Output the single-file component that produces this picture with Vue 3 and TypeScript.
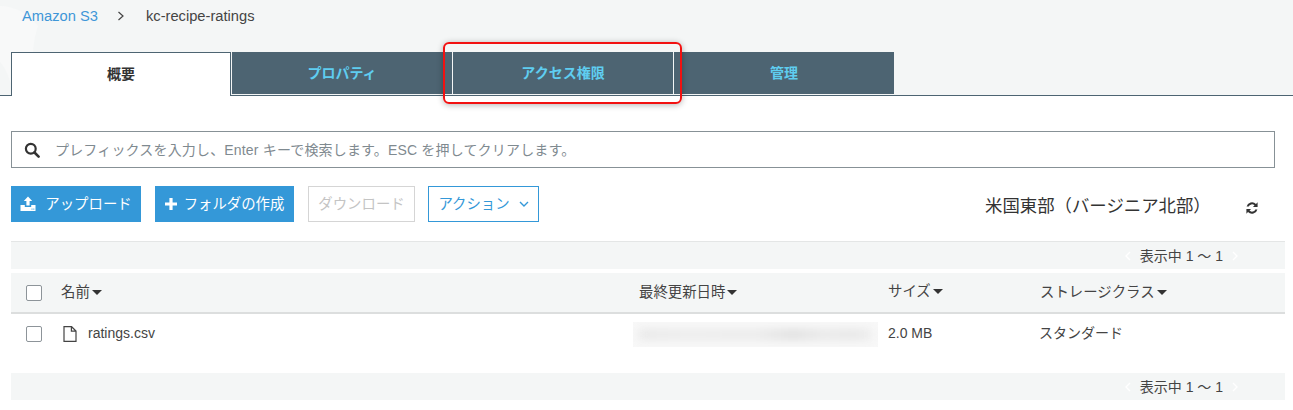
<script setup lang="ts">
const tabs = ['概要', 'プロパティ', 'アクセス権限', '管理']

const columns = [
  { label: '名前', cls: 'col-name' },
  { label: '最終更新日時', cls: 'col-date' },
  { label: 'サイズ', cls: 'col-size' },
  { label: 'ストレージクラス', cls: 'col-class' },
]
</script>

<template>
  <div class="page">
    <header class="top">
      <svg class="swoosh" width="45" height="95" viewBox="0 0 45 95">
        <path d="M0 6 C14 6 30 14 38 26 C36 32 34 40 33 52 H11 V84 C8 74 4 66 0 62 Z" fill="#f8f9f9" />
      </svg>
      <nav class="crumbs">
        <a class="crumb-link">Amazon S3</a>
        <svg class="crumb-sep" width="8" height="10" viewBox="0 0 8 10">
          <path d="M1.5 1 L6 5 L1.5 9" fill="none" stroke="#444" stroke-width="1.2" />
        </svg>
        <span>kc-recipe-ratings</span>
      </nav>
      <div class="tabs">
        <div v-for="(tab, i) in tabs" :key="tab" class="tab" :class="{ active: i === 0 }">{{ tab }}</div>
      </div>
    </header>

    <main class="content">
      <div class="search">
        <svg width="16" height="16" viewBox="0 0 16 16">
          <circle cx="6.8" cy="6.8" r="4.9" fill="none" stroke="#333" stroke-width="2.2" />
          <path d="M10.5 10.5 L14.6 14.6" stroke="#333" stroke-width="2.6" stroke-linecap="round" />
        </svg>
        <span class="search-text">プレフィックスを入力し、Enter キーで検索します。ESC を押してクリアします。</span>
      </div>

      <div class="toolbar">
        <button class="btn primary upload">
          <svg width="16" height="16" viewBox="0 0 16 16">
            <path d="M8 0.5 L12.2 5 H9.6 V9.5 H6.4 V5 H3.8 Z" fill="#fff" />
            <path d="M0.5 9 H4.8 V11 H11.2 V9 H15.5 V15 H0.5 Z" fill="#fff" />
            <rect x="11.5" y="12.6" width="1" height="1" fill="#3498d8" />
            <rect x="13.3" y="12.6" width="1" height="1" fill="#3498d8" />
          </svg>
          <span class="btn-text">アップロード</span>
        </button>
        <button class="btn primary folder">
          <svg width="12" height="12" viewBox="0 0 12 12">
            <path d="M4.4 0 H7.6 V4.4 H12 V7.6 H7.6 V12 H4.4 V7.6 H0 V4.4 H4.4 Z" fill="#fff" />
          </svg>
          <span class="btn-text">フォルダの作成</span>
        </button>
        <button class="btn disabled"><span class="btn-text">ダウンロード</span></button>
        <button class="btn outline">
          <span class="btn-text">アクション</span>
          <svg width="10" height="6" viewBox="0 0 10 6">
            <path d="M1 1 L5 5 L9 1" fill="none" stroke="#3498d8" stroke-width="1.4" />
          </svg>
        </button>
        <span class="region">米国東部（バージニア北部）</span>
        <svg class="refresh" width="14" height="14" viewBox="0 0 14 14">
          <path d="M1.6 5.6 A5.6 5.6 0 0 1 11 2.9 L12.6 1.3 V6 H7.9 L9.5 4.4 A3.5 3.5 0 0 0 3.7 5.6 Z" fill="#333" />
          <path d="M12.4 8.4 A5.6 5.6 0 0 1 3 11.1 L1.4 12.7 V8 H6.1 L4.5 9.6 A3.5 3.5 0 0 0 10.3 8.4 Z" fill="#333" />
        </svg>
      </div>

      <div class="pager">
        <svg width="6" height="10" viewBox="0 0 6 10"><path d="M5 1 L1 5 L5 9" fill="none" stroke="#fff" stroke-width="1.4" /></svg>
        <span class="pager-text">表示中 1 ～ 1</span>
        <svg width="6" height="10" viewBox="0 0 6 10"><path d="M1 1 L5 5 L1 9" fill="none" stroke="#fff" stroke-width="1.4" /></svg>
      </div>

      <div class="table-head">
        <span class="check"></span>
        <div v-for="col in columns" :key="col.label" class="th" :class="col.cls">
          <span class="th-text">{{ col.label }}</span><i class="caret"></i>
        </div>
      </div>

      <div class="table-row">
        <span class="check"></span>
        <div class="col-name file">
          <svg width="14" height="16" viewBox="0 0 14 16">
            <path d="M1 0.7 H8.6 L13 5 V15.3 H1 Z M8.4 0.7 V5.2 H13" fill="none" stroke="#444" stroke-width="1.2" />
          </svg>
          <span>ratings.csv</span>
        </div>
        <div class="col-date">
          <div class="blurred"><div class="blur-ink"></div></div>
        </div>
        <div class="col-size">2.0 MB</div>
        <div class="col-class storage">スタンダード</div>
      </div>

      <div class="pager footer-pager">
        <svg width="6" height="10" viewBox="0 0 6 10"><path d="M5 1 L1 5 L5 9" fill="none" stroke="#fff" stroke-width="1.4" /></svg>
        <span class="pager-text">表示中 1 ～ 1</span>
        <svg width="6" height="10" viewBox="0 0 6 10"><path d="M1 1 L5 5 L1 9" fill="none" stroke="#fff" stroke-width="1.4" /></svg>
      </div>
    </main>

    <div class="highlight"></div>
  </div>
</template>

<style scoped>
.page {
  position: relative;
  width: 1293px;
  height: 410px;
  overflow: hidden;
  background: #fff;
  color: #444;
  font-family: "Liberation Sans", "Noto Sans CJK JP", sans-serif;
  font-size: 14px;
}

.top {
  position: relative;
  height: 96px;
  box-sizing: border-box;
  background: #f4f6f6;
  border-bottom: 1px solid #4d6472;
  padding-left: 11px;
}
.swoosh {
  position: absolute;
  left: 0;
  top: 0;
}
.crumbs {
  position: relative;
  height: 52px;
  box-sizing: border-box;
  padding: 8px 0 0 11px;
  display: flex;
  align-items: flex-start;
  line-height: 16px;
  font-size: 14.7px;
  color: #444;
}
.crumb-link {
  color: #3f97d8;
}
.crumb-sep {
  margin: 3px 21px 0 19px;
}

.tabs {
  position: relative;
  display: flex;
  gap: 1px;
}
.tab {
  width: 220px;
  height: 42px;
  box-sizing: border-box;
  padding-bottom: 3px;
  display: flex;
  align-items: center;
  justify-content: center;
  background: #4d6472;
  color: #5fcdf0;
  font-size: 14px;
  font-weight: 700;
}
.tab.active {
  height: 44px;
  padding-bottom: 4px;
  background: #fff;
  color: #333;
  border: 1px solid #4d6472;
  border-bottom: 0;
}

.content {
  padding: 35px 18px 0 11px;
}

.search {
  height: 37px;
  box-sizing: border-box;
  width: 1264px;
  border: 1px solid #879196;
  display: flex;
  align-items: center;
  padding-left: 12px;
  gap: 15px;
  color: #7f8a90;
}
.search-text {
  padding-bottom: 2px;
  letter-spacing: 0.17px;
}

.toolbar {
  display: flex;
  align-items: center;
  margin-top: 18px;
  height: 36px;
}
.btn {
  height: 36px;
  box-sizing: border-box;
  display: flex;
  align-items: center;
  justify-content: center;
  font-family: inherit;
  font-size: 14.4px;
  border: 1px solid #3498d8;
  padding: 0;
  background: #fff;
}
.btn-text {
  padding-bottom: 3px;
}
.btn.primary {
  background: #3498d8;
  color: #fff;
}
.upload {
  width: 130px;
  gap: 9px;
}
.folder {
  width: 139px;
  margin-left: 14px;
  gap: 7px;
}
.disabled {
  width: 107px;
  margin-left: 14px;
  border-color: #d5d5d5;
  color: #c4c4c4;
}
.outline {
  width: 111px;
  margin-left: 13px;
  color: #3498d8;
  gap: 9px;
}
.region {
  margin-left: 446px;
  font-size: 17.4px;
  color: #333;
  white-space: nowrap;
}
.refresh {
  margin-left: 34px;
  margin-top: 8px;
}

.pager {
  margin-top: 19px;
  height: 28px;
  box-sizing: border-box;
  width: 1274px;
  background: #f4f6f6;
  border-top: 1px solid #e4e6e6;
  display: flex;
  align-items: center;
  justify-content: flex-end;
  gap: 9px;
  padding-right: 47px;
  color: #444;
}
.pager-text {
  padding-bottom: 2px;
}
.footer-pager {
  margin-top: 20px;
  border-top: 0;
  height: 27px;
}

.table-head,
.table-row {
  display: flex;
  align-items: center;
  width: 1274px;
  box-sizing: border-box;
  padding-left: 15px;
}
.table-head {
  margin-top: 4px;
  height: 41px;
  background: #f4f6f6;
  border-bottom: 2px solid #dcdede;
}
.table-row {
  height: 39px;
}
.check {
  width: 16px;
  height: 16px;
  box-sizing: border-box;
  flex: none;
  background: #fff;
  border: 1px solid #8d9499;
  border-radius: 2px;
  margin-right: 19px;
}
.th {
  display: flex;
  align-items: center;
  gap: 2px;
}
.th-text {
  font-size: 14.4px;
  padding-bottom: 4px;
  display: inline-block;
}
.caret {
  width: 0;
  height: 0;
  border-left: 5px solid transparent;
  border-right: 5px solid transparent;
  border-top: 5px solid #333;
}
.col-name {
  width: 578px;
  flex: none;
}
.col-date {
  width: 249px;
  flex: none;
}
.col-size {
  width: 152px;
  flex: none;
}
.col-class {
  flex: none;
}
.storage {
  padding-bottom: 3px;
  margin-left: -1px;
}
.file {
  display: flex;
  align-items: center;
  gap: 11px;
  padding-left: 2px;
  box-sizing: border-box;
}
.file span,
.col-size {
  padding-bottom: 2px;
}
.blurred {
  width: 245px;
  height: 25px;
  margin-left: -6px;
  margin-top: 2px;
  overflow: hidden;
  background: #f8f8f8;
}
.blur-ink {
  height: 11px;
  margin: 7px 6px 0;
  background: linear-gradient(90deg, #e8e8e8, #ececec 20%, #ebebeb 50%, #e0e0e0 66%, #e9e9e9 80%, #e6e6e6 92%, #eeeeee);
  filter: blur(4px);
}

.highlight {
  position: absolute;
  left: 443px;
  top: 42px;
  width: 239px;
  height: 62px;
  box-sizing: border-box;
  border: 2px solid #f21111;
  border-radius: 6px;
  box-shadow: 0 1px 6px rgba(0, 0, 0, 0.3);
}
</style>
